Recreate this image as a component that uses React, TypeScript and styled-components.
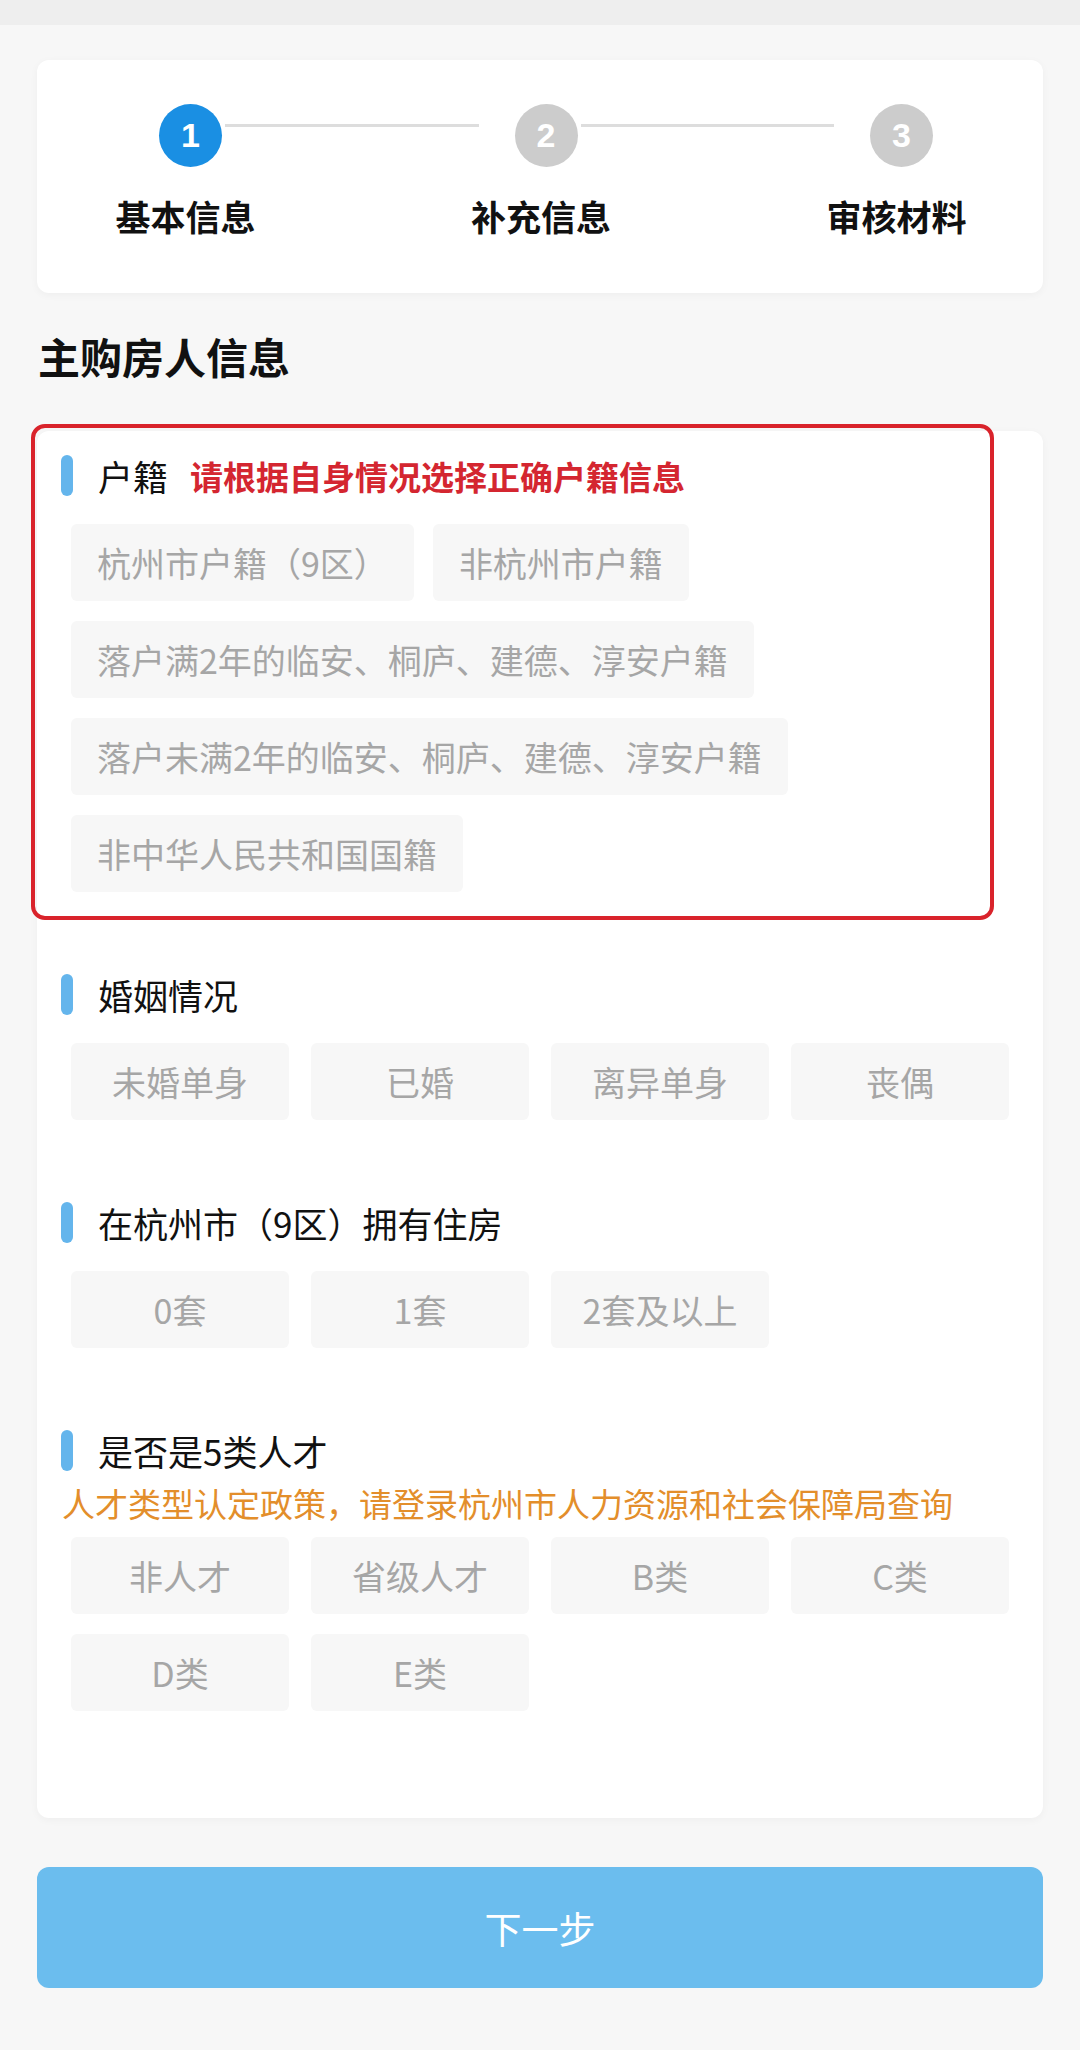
import React from 'react';
import styled, { createGlobalStyle } from 'styled-components';

const GlobalStyle = createGlobalStyle`
  html, body {
    margin: 0;
    padding: 0;
    background: #f7f7f7;
    font-family: "Noto Sans CJK SC", "Noto Sans", "Liberation Sans", sans-serif;
  }
`;

const steps = ['基本信息', '补充信息', '审核材料'];

const hukouOptions = [
  '杭州市户籍（9区）',
  '非杭州市户籍',
  '落户满2年的临安、桐庐、建德、淳安户籍',
  '落户未满2年的临安、桐庐、建德、淳安户籍',
  '非中华人民共和国国籍',
];
const marriageOptions = ['未婚单身', '已婚', '离异单身', '丧偶'];
const houseOptions = ['0套', '1套', '2套及以上'];
const talentOptions = ['非人才', '省级人才', 'B类', 'C类', 'D类', 'E类'];

const App = () => {
  return (
    <>
      <GlobalStyle />
      <TopBar />
      <Page>
        <StepCard>
          {steps.map((label, i) => (
            <React.Fragment key={label}>
              {i > 0 && <StepLine />}
              <Step>
                <StepCircle active={i === 0}>{i + 1}</StepCircle>
                <StepLabel>{label}</StepLabel>
              </Step>
            </React.Fragment>
          ))}
        </StepCard>

        <PageTitle>主购房人信息</PageTitle>

        <FormCard>
          <Section>
            <Highlight />
            <SectionHeader>
              <Marker />
              <SectionLabel>户籍</SectionLabel>
              <Warning>请根据自身情况选择正确户籍信息</Warning>
            </SectionHeader>
            <ChipWrap>
              {hukouOptions.map((o) => (
                <Chip key={o} auto>
                  {o}
                </Chip>
              ))}
            </ChipWrap>
          </Section>

          <Section>
            <SectionHeader>
              <Marker />
              <SectionLabel>婚姻情况</SectionLabel>
            </SectionHeader>
            <ChipGrid>
              {marriageOptions.map((o) => (
                <Chip key={o}>{o}</Chip>
              ))}
            </ChipGrid>
          </Section>

          <Section>
            <SectionHeader>
              <Marker />
              <SectionLabel>在杭州市（9区）拥有住房</SectionLabel>
            </SectionHeader>
            <ChipGrid>
              {houseOptions.map((o) => (
                <Chip key={o}>{o}</Chip>
              ))}
            </ChipGrid>
          </Section>

          <Section>
            <SectionHeader>
              <Marker />
              <SectionLabel>是否是5类人才</SectionLabel>
            </SectionHeader>
            <Notice>人才类型认定政策，请登录杭州市人力资源和社会保障局查询</Notice>
            <ChipGrid>
              {talentOptions.map((o) => (
                <Chip key={o}>{o}</Chip>
              ))}
            </ChipGrid>
          </Section>
        </FormCard>

        <NextButton>下一步</NextButton>
      </Page>
    </>
  );
};

export default App;

const TopBar = styled.div`
  height: 25px;
  background: #eeeeee;
`;

const Page = styled.div`
  padding: 35px 37px 60px;
`;

const StepCard = styled.div`
  display: flex;
  background: #fff;
  border-radius: 12px;
  box-shadow: 0 2px 8px rgba(0, 0, 0, 0.04);
  padding: 44px 110px 56px 122px;
`;

const Step = styled.div`
  width: 63px;
  display: flex;
  flex-direction: column;
  align-items: center;
`;

const StepCircle = styled.div<{ active?: boolean }>`
  width: 63px;
  height: 63px;
  border-radius: 50%;
  background: ${(p) => (p.active ? '#1a8fe3' : '#cccccc')};
  color: #fff;
  font-family: "Liberation Sans", Arial, sans-serif;
  font-weight: 700;
  font-size: 34px;
  display: flex;
  align-items: center;
  justify-content: center;
`;

const StepLine = styled.div`
  flex: 1;
  height: 3px;
  margin: 20px 36px 0 3px;
  background: #dddddd;
`;

const StepLabel = styled.div`
  margin: 28px 10px 0 0;
  font-size: 35px;
  line-height: 42px;
  font-weight: 700;
  color: #111;
  white-space: nowrap;
`;

const PageTitle = styled.h2`
  margin: 35px 0 47px 1px;
  font-size: 42px;
  line-height: 56px;
  font-weight: 700;
  color: #111;
`;

const FormCard = styled.div`
  background: #fff;
  border-radius: 12px;
  box-shadow: 0 2px 8px rgba(0, 0, 0, 0.04);
  padding: 24px 34px 107px 24px;
  display: flex;
  flex-direction: column;
  gap: 82px;
`;

const Section = styled.div`
  position: relative;
`;

const Highlight = styled.div`
  position: absolute;
  top: -31px;
  left: -30px;
  right: 15px;
  bottom: -28px;
  border: 4px solid #d9232b;
  border-radius: 14px;
  pointer-events: none;
`;

const SectionHeader = styled.div`
  display: flex;
  align-items: center;
  height: 41px;
  margin-bottom: 28px;
`;

const Marker = styled.div`
  width: 12px;
  height: 41px;
  border-radius: 6px;
  background: #64b5ec;
  margin-right: 25px;
`;

const SectionLabel = styled.span`
  font-size: 35px;
  color: #111;
`;

const Warning = styled.span`
  margin-left: 22px;
  font-size: 33px;
  font-weight: 700;
  color: #d42630;
`;

const Notice = styled.div`
  margin: -18px 0 12px 1px;
  font-size: 33px;
  line-height: 44px;
  color: #e38e2b;
  white-space: nowrap;
`;

const ChipWrap = styled.div`
  margin-left: 10px;
  display: flex;
  flex-wrap: wrap;
  gap: 20px 19px;
`;

const ChipGrid = styled.div`
  margin-left: 10px;
  display: grid;
  grid-template-columns: repeat(4, 218px);
  gap: 20px 22px;
`;

const Chip = styled.div<{ auto?: boolean }>`
  height: 77px;
  padding: ${(p) => (p.auto ? '0 26px' : '0')};
  border-radius: 6px;
  background: #f7f7f7;
  color: #a6a6a6;
  font-size: 34px;
  display: flex;
  align-items: center;
  justify-content: center;
  white-space: nowrap;
`;

const NextButton = styled.div`
  margin-top: 49px;
  height: 121px;
  border-radius: 12px;
  background: #6bbdee;
  color: #fff;
  font-size: 37px;
  display: flex;
  align-items: center;
  justify-content: center;
`;
